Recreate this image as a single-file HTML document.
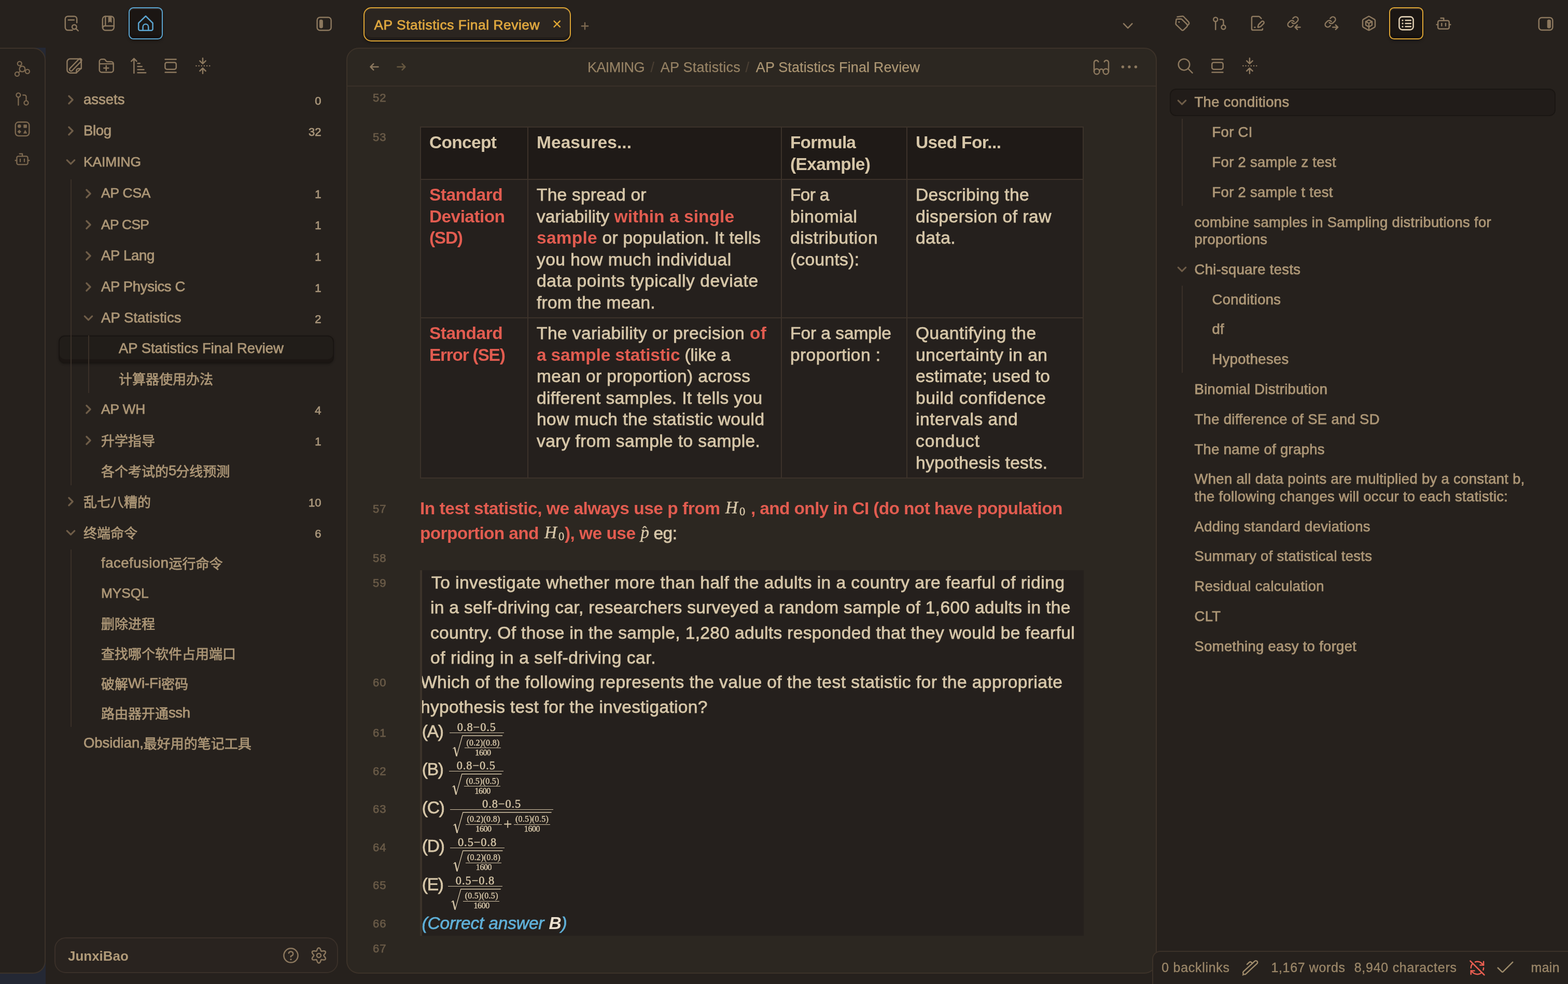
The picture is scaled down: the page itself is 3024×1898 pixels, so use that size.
<!DOCTYPE html>
<html lang="en"><head>
<meta charset="utf-8">
<title>AP Statistics Final Review - Obsidian</title>
<style>
*{box-sizing:border-box;margin:0;padding:0}
html,body{width:3024px;height:1898px;overflow:hidden;background:#26211d}
body{position:relative;will-change:transform;font-family:"Liberation Sans","Noto Sans CJK SC",sans-serif;color:#ac9676;font-size:26px;letter-spacing:.02em;-webkit-font-smoothing:antialiased;-webkit-text-stroke:.75px}
.abs{position:absolute}
svg{display:block;overflow:visible}
.ic{position:absolute;fill:none;stroke:#8f7b62;stroke-width:2;stroke-linecap:round;stroke-linejoin:round}
.t{position:absolute;white-space:nowrap;line-height:1}
.fit{display:inline-block;white-space:nowrap}
/* ribbon */
#bluebg{left:0;top:92px;width:88px;height:1806px;background:#242834}
#ribbon{left:-4px;top:92px;width:92px;height:1786px;background:#26211d;border:2px solid #3c3229;border-radius:0 24px 24px 0}
/* editor pane */
#pane{left:668px;top:92px;width:1563px;height:1786px;background:#2c2721;border:2px solid #3c3229;border-radius:24px;overflow:hidden}
#panehead{left:0;top:0;width:100%;height:74px;border-bottom:2px solid #3a3028}
/* status bar */
#status{left:2222px;top:1834px;width:820px;height:80px;background:#26211d;border:2px solid #3c3229;border-radius:16px 0 0 0}

/* top bars */
.btn-active{position:absolute;border-radius:10px;background:#1b1714}
/* file tree */
#tree{left:112px;top:162.4px;width:532px;font-size:27.5px;letter-spacing:-.3px}
.row{position:relative;width:532px;white-space:nowrap}
.row.fo{height:60.2px;line-height:60.2px}
.row.fi{height:57.8px;line-height:57.8px}
.row .nm{position:absolute;top:-.6px}
.row .ct{position:absolute;right:24.500px;top:2.300px;font-size:22px;letter-spacing:0;color:#a8957a}
.row svg.chev{position:absolute;width:29px;height:29px;fill:none;stroke:#6f5d48;stroke-width:2.7;stroke-linecap:round;stroke-linejoin:round}
.l0 .nm{left:49px}.l1 .nm{left:83px}.l2 .nm{left:117px}
.l0 svg.chev{left:10px}.l1 svg.chev{left:44px}
.row.fo svg.chev{top:15.6px}
.row.active::before{content:"";position:absolute;left:.5px;right:0;top:3px;bottom:1.2px;border-radius:12px;background:#211d19;border:2px solid #191512;box-shadow:inset 0 -6px 0 #1b1613,0 2px 4px rgba(0,0,0,.25)}
.guide{position:absolute;width:2px;background:#3a3028}
#vault{left:105px;top:1808px;width:547px;height:69px;border:2px solid #3a3029;border-radius:22px;background:#29231f}

/* outline */
#outline{left:2256px;top:168.3px;width:744px;font-size:27.5px;letter-spacing:.29px}
.orow{position:relative;width:744px;min-height:57.8px;padding:12.2px 0}
.orow .nm{display:block;line-height:33.4px;white-space:nowrap}
.o0 .nm{margin-left:47.5px}.o1 .nm{margin-left:81.5px}
.orow svg.chev{position:absolute;left:9px;top:14.5px;width:29px;height:29px;fill:none;stroke:#6f5d48;stroke-width:2.5;stroke-linecap:round;stroke-linejoin:round}
.orow.active::before{content:"";position:absolute;left:0;right:0;top:2.5px;bottom:2.5px;border-radius:12px;background:#211c19;border:2px solid #1a1613}
.orow.active .nm,.orow.active svg{position:relative}
.orow.active svg.chev{position:absolute}

/* pane content */
#pane{border:none}
#paneborder{left:668px;top:92px;width:1563px;height:1786px;border:2px solid #3c3229;border-radius:24px;pointer-events:none}
#panehead{left:0;top:0;width:100%;height:75px;border-bottom:2px solid #3a3028}
.crumb{font-size:27px;letter-spacing:0}
.crumb{margin-top:1px;-webkit-text-stroke:.25px}.crumb.c1{color:#968264}.crumb.c2{color:#ac9673}.crumb.sep{color:#4a3f33}
.ln{font-size:22px;line-height:22px;color:#695a47;letter-spacing:.05em;margin-top:1px}
.p{font-size:33.5px;line-height:48px;color:#d6c6a8;letter-spacing:0}
.red{color:#e25c50}.b,b,.th{font-weight:700;-webkit-text-stroke:0}.m{-webkit-text-stroke:.45px}.it{font-style:italic}.blue{color:#5fafd7}.cream{color:#ece1d0}
.m{font-family:"Liberation Serif",serif;color:#d6c6a8;letter-spacing:0}
.s1{font-size:22.4px;line-height:26px}
.s2{font-size:16px;line-height:19px}
.bar{background:#d6c6a8}
.rad{fill:none;stroke:#d6c6a8;stroke-linecap:butt;stroke-linejoin:miter}
#blk{background:#25201d}
#blkbar{background:#3c332a}
#tbl{width:1280px;display:grid;grid-template-columns:205px 487px 240px 338px;grid-template-rows:99px 265px 307px;gap:2px;padding:2px;background:#3c322a}
.td{background:#25201d;padding:8px 16px;font-size:33.5px;color:#d6c6a8;letter-spacing:0;overflow:hidden}
.td.th{background:#1f1a17}
.tl{height:41.6px;line-height:41.6px;white-space:nowrap}

/* tab + active buttons + status text */
#tab{left:701px;top:14px;width:400px;height:66px;border:2px solid #dea534;border-radius:15px;background:#2b2520;box-shadow:inset 0 -6px 0 #211c18,inset 0 2px 1px #38322d,0 3px 5px rgba(0,0,0,.35)}
#tabtxt{left:721.5px;top:32.3px;font-size:26.3px;line-height:32px;color:#dea73f;letter-spacing:0}
#homebtn{left:248px;top:14px;width:66px;height:62px;border:2.5px solid #5ba4cf;border-radius:9.500px;background:#1b1613;box-shadow:inset 0 -6px 0 #171210,inset 0 2px 1px #332c28,0 3px 5px rgba(0,0,0,.35)}
#outbtn{left:2679px;top:14px;width:66px;height:62px;border:2.5px solid #dea534;border-radius:9.500px;background:#1b1613;box-shadow:inset 0 -6px 0 #171210,inset 0 2px 1px #332c28,0 3px 5px rgba(0,0,0,.35)}
.st{font-size:25px;line-height:30px;color:#9a8668;letter-spacing:0;top:1851px;-webkit-text-stroke:.35px}
.cj{position:relative;top:2px;letter-spacing:0;font-size:26px}
</style>
</head>
<body>
<div class="abs" id="bluebg"></div>
<div class="abs" id="ribbon"></div>
<div class="abs" id="tree">
<div class="row fo l0"><svg class="chev" viewBox="0 0 24 24"><path d="m9 6 6 6-6 6"></path></svg><span class="nm"><span class="fit" style="letter-spacing: -0.02px;">assets</span></span><span class="ct">0</span></div>
<div class="row fo l0"><svg class="chev" viewBox="0 0 24 24"><path d="m9 6 6 6-6 6"></path></svg><span class="nm"><span class="fit" style="letter-spacing: -0.35px;">Blog</span></span><span class="ct">32</span></div>
<div class="row fo l0"><svg class="chev" viewBox="0 0 24 24"><path d="m6 9 6 6 6-6"></path></svg><span class="nm"><span class="fit" style="font-size: 26.4px; letter-spacing: -0.08px;">KAIMING</span></span></div>
<div class="row fo l1"><svg class="chev" viewBox="0 0 24 24"><path d="m9 6 6 6-6 6"></path></svg><span class="nm"><span class="fit" style="font-size: 26.4px; letter-spacing: -0.17px;">AP CSA</span></span><span class="ct">1</span></div>
<div class="row fo l1"><svg class="chev" viewBox="0 0 24 24"><path d="m9 6 6 6-6 6"></path></svg><span class="nm"><span class="fit" style="font-size: 26.4px; letter-spacing: -0.67px;">AP CSP</span></span><span class="ct">1</span></div>
<div class="row fo l1"><svg class="chev" viewBox="0 0 24 24"><path d="m9 6 6 6-6 6"></path></svg><span class="nm"><span class="fit" style="letter-spacing: -0.3px;">AP Lang</span></span><span class="ct">1</span></div>
<div class="row fo l1"><svg class="chev" viewBox="0 0 24 24"><path d="m9 6 6 6-6 6"></path></svg><span class="nm"><span class="fit" style="letter-spacing: -0.33px;">AP Physics C</span></span><span class="ct">1</span></div>
<div class="row fo l1"><svg class="chev" viewBox="0 0 24 24"><path d="m6 9 6 6 6-6"></path></svg><span class="nm"><span class="fit" style="letter-spacing: 0.06px;">AP Statistics</span></span><span class="ct">2</span></div>
<div class="row fi l2 active"><span class="nm"><span class="fit" style="letter-spacing: -0.04px;">AP Statistics Final Review</span></span></div>
<div class="row fi l2"><span class="nm"><span class="cj">计算器使用办法</span></span></div>
<div class="row fo l1"><svg class="chev" viewBox="0 0 24 24"><path d="m9 6 6 6-6 6"></path></svg><span class="nm"><span class="fit" style="font-size: 26.4px; letter-spacing: -0.16px;">AP WH</span></span><span class="ct">4</span></div>
<div class="row fo l1"><svg class="chev" viewBox="0 0 24 24"><path d="m9 6 6 6-6 6"></path></svg><span class="nm"><span class="cj">升学指导</span></span><span class="ct">1</span></div>
<div class="row fi l1"><span class="nm"><span class="cj">各个考试的</span><span class="fit" style="letter-spacing: -1px;">5</span><span class="cj">分线预测</span></span></div>
<div class="row fo l0"><svg class="chev" viewBox="0 0 24 24"><path d="m9 6 6 6-6 6"></path></svg><span class="nm"><span class="cj">乱七八糟的</span></span><span class="ct">10</span></div>
<div class="row fo l0"><svg class="chev" viewBox="0 0 24 24"><path d="m6 9 6 6 6-6"></path></svg><span class="nm"><span class="cj">终端命令</span></span><span class="ct">6</span></div>
<div class="row fi l1"><span class="nm"><span class="fit" style="letter-spacing: 0.51px;">facefusion</span><span class="cj">运行命令</span></span></div>
<div class="row fi l1"><span class="nm"><span class="fit" style="font-size: 26.4px; letter-spacing: -0.18px;">MYSQL</span></span></div>
<div class="row fi l1"><span class="nm"><span class="cj">删除进程</span></span></div>
<div class="row fi l1"><span class="nm"><span class="cj">查找哪个软件占用端口</span></span></div>
<div class="row fi l1"><span class="nm"><span class="cj">破解</span><span class="fit" style="letter-spacing: -0.04px;">Wi-Fi</span><span class="cj">密码</span></span></div>
<div class="row fi l1"><span class="nm"><span class="cj">路由器开通</span><span class="fit" style="letter-spacing: -0.4px;">ssh</span></span></div>
<div class="row fi l0"><span class="nm"><span class="fit" style="letter-spacing: -0.05px;">Obsidian,</span><span class="cj">最好用的笔记工具</span></span></div>
</div>
<div class="guide" style="left:136px;top:346px;height:590px"></div>
<div class="guide" style="left:170px;top:647px;height:111px"></div>
<div class="guide" style="left:136px;top:1060px;height:342px"></div>
<div class="abs" id="vault"><span class="t b" style="left:24px;top:19.500px;font-size:26px;line-height:28px;color:#b09a78"><span class="fit" style="letter-spacing: -0.03px;">JunxiBao</span></span></div>
<div class="abs" id="pane">
<!--PANE-->
<div class="abs" id="panehead"></div>
<div class="t crumb c1" style="left:465px;top:21px;line-height:32px"><span class="fit" style="letter-spacing: -0.59px;">KAIMING</span></div>
<div class="t crumb sep" style="left:586.5px;top:21px;line-height:32px">/</div>
<div class="t crumb c1" style="left:605.7px;top:21px;line-height:32px"><span class="fit" style="letter-spacing: 0.24px;">AP Statistics</span></div>
<div class="t crumb sep" style="left:769.5px;top:21px;line-height:32px">/</div>
<div class="t crumb c2" style="left:789.8px;top:21px;line-height:32px"><span class="fit" style="letter-spacing: 0.12px;">AP Statistics Final Review</span></div>
<div class="t ln" style="left:51px;top:85px">52</div>
<div class="t ln" style="left:51px;top:161px">53</div>
<div class="t ln" style="left:51px;top:877.5px">57</div>
<div class="t ln" style="left:51px;top:973px">58</div>
<div class="t ln" style="left:51px;top:1020.6px">59</div>
<div class="t ln" style="left:51px;top:1213px">60</div>
<div class="t ln" style="left:51px;top:1310px">61</div>
<div class="t ln" style="left:51px;top:1383.5px">62</div>
<div class="t ln" style="left:51px;top:1457px">63</div>
<div class="t ln" style="left:51px;top:1530.5px">64</div>
<div class="t ln" style="left:51px;top:1604px">65</div>
<div class="t ln" style="left:51px;top:1678px">66</div>
<div class="t ln" style="left:51px;top:1726px">67</div>
<div class="abs" id="tbl" style="left:142px;top:152px"><div class="td th" style=""><div class="tl"><span class="fit" style="letter-spacing: -0.67px;">Concept</span></div></div><div class="td th" style=""><div class="tl"><span class="fit" style="letter-spacing: 0.05px;">Measures...</span></div></div><div class="td th" style=""><div class="tl"><span class="fit" style="letter-spacing: -0.86px;">Formula</span></div><div class="tl"><span class="fit" style="letter-spacing: -0.64px;">(Example)</span></div></div><div class="td th" style=""><div class="tl"><span class="fit" style="letter-spacing: -0.63px;">Used For...</span></div></div><div class="td " style=""><div class="tl"><span class="fit red b" style="letter-spacing: -0.51px;">Standard</span></div><div class="tl"><span class="fit red b" style="letter-spacing: -0.6px;">Deviation</span></div><div class="tl"><span class="fit red b" style="letter-spacing: -1.29px;">(SD)</span></div></div><div class="td " style=""><div class="tl"><span class="fit" style="letter-spacing: 0.24px;">The spread or</span></div><div class="tl"><span class="fit" style="letter-spacing: 0.05px;">variability <b class="red">within a single</b></span></div><div class="tl"><span class="fit" style="letter-spacing: 0.26px;"><b class="red">sample</b> or population. It tells</span></div><div class="tl"><span class="fit" style="letter-spacing: 0.46px;">you how much individual</span></div><div class="tl"><span class="fit" style="letter-spacing: 0.62px;">data points typically deviate</span></div><div class="tl"><span class="fit" style="letter-spacing: 0.26px;">from the mean.</span></div></div><div class="td " style=""><div class="tl"><span class="fit" style="letter-spacing: -0.7px;">For a</span></div><div class="tl"><span class="fit" style="letter-spacing: 0.6px;">binomial</span></div><div class="tl"><span class="fit" style="letter-spacing: 0.6px;">distribution</span></div><div class="tl"><span class="fit" style="letter-spacing: 0.33px;">(counts):</span></div></div><div class="td " style=""><div class="tl"><span class="fit" style="letter-spacing: 0.34px;">Describing the</span></div><div class="tl"><span class="fit" style="letter-spacing: 0.51px;">dispersion of raw</span></div><div class="tl"><span class="fit" style="letter-spacing: 0.52px;">data.</span></div></div><div class="td " style=""><div class="tl"><span class="fit red b" style="letter-spacing: -0.51px;">Standard</span></div><div class="tl"><span class="fit red b" style="letter-spacing: -1.27px;">Error (SE)</span></div></div><div class="td " style=""><div class="tl"><span class="fit" style="letter-spacing: 0.43px;">The variability or precision <b class="red">of</b></span></div><div class="tl"><span class="fit" style="letter-spacing: -0.16px;"><b class="red">a sample statistic</b> (like a</span></div><div class="tl"><span class="fit" style="letter-spacing: 0.39px;">mean or proportion) across</span></div><div class="tl"><span class="fit" style="letter-spacing: 0.37px;">different samples. It tells you</span></div><div class="tl"><span class="fit" style="letter-spacing: 0.47px;">how much the statistic would</span></div><div class="tl"><span class="fit" style="letter-spacing: 0.39px;">vary from sample to sample.</span></div></div><div class="td " style=""><div class="tl"><span class="fit" style="letter-spacing: -0.05px;">For a sample</span></div><div class="tl"><span class="fit" style="letter-spacing: 0.41px;">proportion :</span></div></div><div class="td " style=""><div class="tl"><span class="fit" style="letter-spacing: 0.48px;">Quantifying the</span></div><div class="tl"><span class="fit" style="letter-spacing: 0.51px;">uncertainty in an</span></div><div class="tl"><span class="fit" style="letter-spacing: 0.24px;">estimate; used to</span></div><div class="tl"><span class="fit" style="letter-spacing: 0.59px;">build confidence</span></div><div class="tl"><span class="fit" style="letter-spacing: 0.55px;">intervals and</span></div><div class="tl"><span class="fit" style="letter-spacing: 0.94px;">conduct</span></div><div class="tl"><span class="fit" style="letter-spacing: 0.28px;">hypothesis tests.</span></div></div></div>
<div class="t p red b" style="left:142px;top:864.5px"><span class="fit" style="letter-spacing: -0.49px;">In test statistic, we always use p from</span></div>
<span class="t m" style="left:731px;top:867.0px;font-size:33px;line-height:40px;font-style:italic">H</span><span class="t m" style="left:758px;top:879.5px;font-size:22.4px;line-height:30px">0</span>
<div class="t p red b" style="left:780px;top:864.5px"><span class="fit" style="letter-spacing: -0.66px;">, and only in CI (do not have population</span></div>
<div class="t p red b" style="left:142px;top:912.6px"><span class="fit" style="letter-spacing: -0.67px;">porportion and</span></div>
<span class="t m" style="left:382px;top:915.1px;font-size:33px;line-height:40px;font-style:italic">H</span><span class="t m" style="left:409px;top:927.6px;font-size:22.4px;line-height:30px">0</span>
<div class="t p red b" style="left:421px;top:912.6px"><span class="fit" style="letter-spacing: -0.56px;">), we use</span></div>
<span class="t m" style="left:567.5px;top:914.6px;font-size:33px;line-height:40px;font-style:italic">p</span>
<span class="t m" style="left:570.9px;top:920.4px;font-size:26px;line-height:26px">ˆ</span>
<div class="t p" style="left:592.5px;top:912.6px"><span class="fit" style="letter-spacing: -0.54px;">eg:</span></div>
<div class="abs" id="blk" style="left:142px;top:1008px;width:1280px;height:704.5px"></div>
<div class="t p" style="left:164px;top:1008px"><span class="fit" style="letter-spacing: 0.47px;">To investigate whether more than half the adults in a country are fearful of riding</span></div>
<div class="t p" style="left:162px;top:1056.4px"><span class="fit" style="letter-spacing: 0.32px;">in a self-driving car, researchers surveyed a random sample of 1,600 adults in the</span></div>
<div class="t p" style="left:162px;top:1104.6px"><span class="fit" style="letter-spacing: 0.36px;">country. Of those in the sample, 1,280 adults responded that they would be fearful</span></div>
<div class="t p" style="left:162px;top:1152.8px"><span class="fit" style="letter-spacing: 0.56px;">of riding in a self-driving car.</span></div>
<div class="t p" style="left:143px;top:1200px"><span class="fit" style="letter-spacing: 0.46px;">Which of the following represents the value of the test statistic for the appropriate</span></div>
<div class="t p" style="left:143px;top:1248px"><span class="fit" style="letter-spacing: 0.31px;">hypothesis test for the investigation?</span></div>
<div class="t p" style="left:145.7px;top:1294.5px"><span style="letter-spacing:-1.2px">(A)</span></div><div class="abs bar" style="left:198.8px;top:1320.8px;width:105.2px;height:1.4px"></div><div class="t m s1" style="left:181.4px;width:140px;text-align:center;top:1298.3px"><span class="fit" style="letter-spacing: 0.95px;">0.8−0.5</span></div><svg class="abs rad" style="left:204.9px;top:1325.4px" width="98.1" height="44" viewBox="0 0 98.1 44"><path d="M0.4 27.2 L3.9 24.6" stroke-width="1.2"></path><path d="M3.6 24.4 L7.6 41.5" stroke-width="2.6"></path><path d="M7.6 42 L18.8 2 H96.1" stroke-width="1.3"></path></svg><div class="abs bar" style="left:228.0px;top:1349.7px;width:70.0px;height:1.2px"></div><div class="t m s2" style="left:203.5px;width:120px;text-align:center;top:1330.6px"><span class="fit" style="letter-spacing: 0.28px;">(0.2)(0.8)</span></div><div class="t m s2" style="left:203.5px;width:120px;text-align:center;top:1349.6px"><span class="fit" style="letter-spacing: -0.4px;">1600</span></div>
<div class="t p" style="left:145.7px;top:1368.4px"><span style="letter-spacing:-1.2px">(B)</span></div><div class="abs bar" style="left:198px;top:1394.7px;width:104.6px;height:1.4px"></div><div class="t m s1" style="left:180.3px;width:140px;text-align:center;top:1372.2px"><span class="fit" style="letter-spacing: 0.95px;">0.8−0.5</span></div><svg class="abs rad" style="left:204.1px;top:1399.3px" width="97.5" height="44" viewBox="0 0 97.5 44"><path d="M0.4 27.2 L3.9 24.6" stroke-width="1.2"></path><path d="M3.6 24.4 L7.6 41.5" stroke-width="2.6"></path><path d="M7.6 42 L18.8 2 H95.5" stroke-width="1.3"></path></svg><div class="abs bar" style="left:227.2px;top:1423.6px;width:69.4px;height:1.2px"></div><div class="t m s2" style="left:202.7px;width:120px;text-align:center;top:1404.5px"><span class="fit" style="letter-spacing: 0.28px;">(0.5)(0.5)</span></div><div class="t m s2" style="left:202.7px;width:120px;text-align:center;top:1423.5px"><span class="fit" style="letter-spacing: -0.4px;">1600</span></div>
<div class="t p" style="left:145.7px;top:1442.3px"><span style="letter-spacing:-1.2px">(C)</span></div><div class="abs bar" style="left:200.3px;top:1468.6px;width:198.7px;height:1.4px"></div><div class="t m s1" style="left:229.65px;width:140px;text-align:center;top:1446.1px"><span class="fit" style="letter-spacing: 0.95px;">0.8−0.5</span></div><svg class="abs rad" style="left:206.4px;top:1473.2px" width="191.6" height="44" viewBox="0 0 191.6 44"><path d="M0.4 27.2 L3.9 24.6" stroke-width="1.2"></path><path d="M3.6 24.4 L7.6 41.5" stroke-width="2.6"></path><path d="M7.6 42 L18.8 2 H189.6" stroke-width="1.3"></path></svg><div class="abs bar" style="left:229.5px;top:1497.5px;width:70.0px;height:1.2px"></div><div class="t m s2" style="left:204.5px;width:120px;text-align:center;top:1478.4px"><span class="fit" style="letter-spacing: 0.28px;">(0.2)(0.8)</span></div><div class="t m s2" style="left:204.5px;width:120px;text-align:center;top:1497.4px"><span class="fit" style="letter-spacing: -0.4px;">1600</span></div><div class="t m" style="left:303.0px;top:1480.6px;font-size:29px;line-height:32px">+</div><div class="abs bar" style="left:323.0px;top:1497.5px;width:69.8px;height:1.2px"></div><div class="t m s2" style="left:298.0px;width:120px;text-align:center;top:1478.4px"><span class="fit" style="letter-spacing: 0.28px;">(0.5)(0.5)</span></div><div class="t m s2" style="left:298.0px;width:120px;text-align:center;top:1497.4px"><span class="fit" style="letter-spacing: -0.4px;">1600</span></div>
<div class="t p" style="left:145.7px;top:1516.3px"><span style="letter-spacing:-1.2px">(D)</span></div><div class="abs bar" style="left:200.3px;top:1542.6px;width:104.6px;height:1.4px"></div><div class="t m s1" style="left:182.6px;width:140px;text-align:center;top:1520.1px"><span class="fit" style="letter-spacing: 0.95px;">0.5−0.8</span></div><svg class="abs rad" style="left:206.4px;top:1547.2px" width="97.5" height="44" viewBox="0 0 97.5 44"><path d="M0.4 27.2 L3.9 24.6" stroke-width="1.2"></path><path d="M3.6 24.4 L7.6 41.5" stroke-width="2.6"></path><path d="M7.6 42 L18.8 2 H95.5" stroke-width="1.3"></path></svg><div class="abs bar" style="left:229.5px;top:1571.5px;width:69.4px;height:1.2px"></div><div class="t m s2" style="left:205.0px;width:120px;text-align:center;top:1552.4px"><span class="fit" style="letter-spacing: 0.28px;">(0.2)(0.8)</span></div><div class="t m s2" style="left:205.0px;width:120px;text-align:center;top:1571.4px"><span class="fit" style="letter-spacing: -0.4px;">1600</span></div>
<div class="t p" style="left:145.7px;top:1590.3px"><span style="letter-spacing:-1.2px">(E)</span></div><div class="abs bar" style="left:196px;top:1616.6px;width:105px;height:1.4px"></div><div class="t m s1" style="left:178.5px;width:140px;text-align:center;top:1594.1px"><span class="fit" style="letter-spacing: 0.95px;">0.5−0.8</span></div><svg class="abs rad" style="left:202.1px;top:1621.2px" width="97.9" height="44" viewBox="0 0 97.9 44"><path d="M0.4 27.2 L3.9 24.6" stroke-width="1.2"></path><path d="M3.6 24.4 L7.6 41.5" stroke-width="2.6"></path><path d="M7.6 42 L18.8 2 H95.9" stroke-width="1.3"></path></svg><div class="abs bar" style="left:225.2px;top:1645.5px;width:69.8px;height:1.2px"></div><div class="t m s2" style="left:200.7px;width:120px;text-align:center;top:1626.4px"><span class="fit" style="letter-spacing: 0.28px;">(0.5)(0.5)</span></div><div class="t m s2" style="left:200.7px;width:120px;text-align:center;top:1645.4px"><span class="fit" style="letter-spacing: -0.4px;">1600</span></div>
<div class="t p it blue" style="left:145.6px;top:1665px"><span class="fit" style="letter-spacing: -0.17px;">(Correct answer <b class="cream">B</b>)</span></div>
<div class="abs" id="blkbar" style="left:142px;top:1008px;width:4px;height:704.5px"></div>
<!--/PANE-->
</div>
<div class="abs" id="paneborder"></div>
<div class="abs" id="outline">
<div class="orow o0 active"><svg class="chev" viewBox="0 0 24 24"><path d="m6 9 6 6 6-6"></path></svg><span class="nm">The conditions</span></div>
<div class="orow o1"><span class="nm">For CI</span></div>
<div class="orow o1"><span class="nm">For 2 sample z test</span></div>
<div class="orow o1"><span class="nm">For 2 sample t test</span></div>
<div class="orow o0"><span class="nm">combine samples in Sampling distributions for<br>proportions</span></div>
<div class="orow o0"><svg class="chev" viewBox="0 0 24 24"><path d="m6 9 6 6 6-6"></path></svg><span class="nm">Chi-square tests</span></div>
<div class="orow o1"><span class="nm">Conditions</span></div>
<div class="orow o1"><span class="nm">df</span></div>
<div class="orow o1"><span class="nm">Hypotheses</span></div>
<div class="orow o0"><span class="nm">Binomial Distribution</span></div>
<div class="orow o0"><span class="nm">The difference of SE and SD</span></div>
<div class="orow o0"><span class="nm">The name of graphs</span></div>
<div class="orow o0"><span class="nm">When all data points are multiplied by a constant b,<br>the following changes will occur to each statistic:</span></div>
<div class="orow o0"><span class="nm">Adding standard deviations</span></div>
<div class="orow o0"><span class="nm">Summary of statistical tests</span></div>
<div class="orow o0"><span class="nm">Residual calculation</span></div>
<div class="orow o0"><span class="nm">CLT</span></div>
<div class="orow o0"><span class="nm">Something easy to forget</span></div>
</div>
<div class="guide" style="left:2279px;top:229px;height:168px"></div>
<div class="guide" style="left:2279px;top:551px;height:168px"></div>
<div class="abs" id="status"></div>
<div class="abs" id="tab"></div>
<div class="t" id="tabtxt"><span class="fit" style="letter-spacing: 0.56px;">AP Statistics Final Review</span></div>
<div class="abs" id="homebtn"></div>
<div class="abs" id="outbtn"></div>
<div class="t st" style="left:2240.3px"><span class="fit" style="letter-spacing: 0.7px;">0 backlinks</span></div>
<div class="t st" style="left:2451.5px"><span class="fit" style="letter-spacing: 0.63px;">1,167 words</span></div>
<div class="t st" style="left:2611.7px"><span class="fit" style="letter-spacing: 0.74px;">8,940 characters</span></div>
<div class="t st" style="left:2952.6px"><span class="fit" style="letter-spacing: 0.27px;">main</span></div>
<svg class="abs" id="icons" style="left:0;top:0" width="3024" height="1898" viewBox="0 0 3024 1898" fill="none" stroke-linecap="round" stroke-linejoin="round">
<g stroke="#8c785e" stroke-width="2.5">
<!-- file-search -->
<path d="M139.5 58.3H131a5.2 5.2 0 0 1-5.2-5.2V36.6a5.2 5.2 0 0 1 5.2-5.2h12a5.2 5.2 0 0 1 5.2 5.2v7.2"></path>
<path d="M131.8 38.5h11"></path>
<circle cx="143.3" cy="52" r="4.3"></circle><path d="M146.6 55.3l4.2 4"></path>
<!-- book-marked -->
<rect x="197.8" y="31.4" width="22" height="27" rx="5.6"></rect>
<path d="M203.3 31.6v18.2"></path><path d="M220 50H202a3.6 3.6 0 0 0-3.6 3.6"></path>
<path d="M209.3 31.5h5.6v11.6l-2.8-2-2.8 2z" fill="#8c785e" stroke-width="1.2"></path>
<!-- left sidebar toggle -->
<rect x="611.6" y="33.6" width="27" height="25" rx="5.5"></rect>
<rect x="616.3" y="38.3" width="6" height="15.6" rx="2" fill="#8c785e" stroke-width="1"></rect>
<!-- right sidebar toggle -->
<rect x="2967.8" y="33.9" width="26.6" height="24.2" rx="5.5"></rect>
<rect x="2984.3" y="38.3" width="6.2" height="15.8" rx="2" fill="#8c785e" stroke-width="1"></rect>
<!-- nav: new note -->
<path d="M156.8 131.5v-12a6 6 0 0 0-6-6h-15.4a6 6 0 0 0-6 6v15.2a6 6 0 0 0 6 6H147z"></path>
<path d="M156.6 132.2h-5.2a4 4 0 0 0-4 4v4.2"></path>
<rect x="130.200" y="122" width="31.100" height="6" rx="3" transform="rotate(-45.800 145.750 125)" stroke-width="2.400"></rect>
<!-- nav: folder plus -->
<path d="M191.7 135v-16.2a4.5 4.5 0 0 1 4.5-4.5h4.4a3 3 0 0 1 2.4 1.2l1.6 2.2a3 3 0 0 0 2.4 1.2h7.2a4.5 4.5 0 0 1 4.5 4.5V135a4.5 4.5 0 0 1-4.500 4.5h-18a4.500 4.500 0 0 1-4.500-4.500z"></path>
<path d="M192 123.200h26.500" stroke-width="2.2"></path>
<path d="M200.200 131.300h9.200M204.800 126.700v9.200"></path>
<!-- nav: sort -->
<path d="M258.400 141v-28M253.300 118.200l5.100-5.200 5.100 5.200"></path>
<path d="M265.500 122.300h4.200M265.500 128.300h8.200M265.500 134.300h12M265.500 140.300h15.700"></path>
<!-- nav: gallery vertical -->
<path d="M318.600 114.600h21M318.600 139.500h21"></path><rect x="318.400" y="120.500" width="21.400" height="13.200" rx="3.400"></rect>
<!-- nav: fold -->
<path d="M391 112.300v10M385.300 117.300l5.700 5.500 5.700-5.500M391 141.800v-10M385.300 137l5.700-5.500 5.700 5.500"></path>
<path d="M378.400 127.100h26" stroke-dasharray="0.100 5.060"></path>
<!-- right: search -->
<circle cx="2283.500" cy="124.600" r="10.800"></circle><path d="M2291.300 132.400l8.300 8.200"></path>
<!-- right: gallery vertical -->
<path d="M2337.500 114.600h21M2337.500 139.500h21"></path><rect x="2337.300" y="120.500" width="21.400" height="13.200" rx="3.400"></rect>
<!-- right: fold -->
<path d="M2410 112.300v10M2404.300 117.300l5.700 5.500 5.700-5.500M2410 141.800v-10M2404.300 137l5.700-5.500 5.700 5.500"></path>
<path d="M2397.400 127.100h26" stroke-dasharray="0.100 5.060"></path>
<!-- tab list chevron -->
<path d="M2167 45.700l8.200 8.400 8.200-8.400" stroke-width="2.600"></path>
<!-- glasses -->
<circle cx="2115.200" cy="138" r="5.200"></circle><circle cx="2132.800" cy="138" r="5.200"></circle>
<path d="M2120.300 137a3.700 3.700 0 0 1 7.400 0"></path>
<path d="M2110 138v-17.500a4.300 4.300 0 0 1 8.300-1.300"></path><path d="M2138 138v-17.500a4.300 4.300 0 0 0-8.300-1.300"></path>
<!-- more dots -->
<g fill="#8c785e" stroke="none"><circle cx="2165.400" cy="129" r="2.700"></circle><circle cx="2177.900" cy="129" r="2.700"></circle><circle cx="2190.400" cy="129" r="2.700"></circle></g>
<!-- help -->
<circle cx="561" cy="1842.900" r="13.600"></circle>
<path d="M556.800 1838.500a4.300 4.300 0 0 1 8.400 1.400c0 2.900-4.300 4.300-4.300 4.300v1.500"></path><path d="M561 1850.600h.01" stroke-width="3.400"></path>
<!-- settings gear -->
<circle cx="614.900" cy="1842.900" r="4"></circle>
<path d="M614.9 1828.2 L616.2 1828.6 L617.2 1829.7 L618.0 1831.2 L618.6 1832.8 L619.1 1834.0 L619.6 1834.7 L620.5 1834.8 L621.8 1834.6 L623.5 1834.3 L625.2 1834.3 L626.7 1834.7 L627.6 1835.6 L627.9 1836.8 L627.5 1838.3 L626.6 1839.8 L625.5 1841.0 L624.7 1842.0 L624.4 1842.9 L624.7 1843.8 L625.5 1844.8 L626.6 1846.0 L627.5 1847.5 L627.9 1849.0 L627.6 1850.2 L626.7 1851.1 L625.2 1851.5 L623.5 1851.5 L621.8 1851.2 L620.5 1851.0 L619.6 1851.1 L619.1 1851.8 L618.6 1853.0 L618.0 1854.6 L617.2 1856.1 L616.2 1857.2 L614.9 1857.6 L613.6 1857.2 L612.6 1856.1 L611.8 1854.6 L611.2 1853.0 L610.7 1851.8 L610.1 1851.1 L609.3 1851.0 L608.0 1851.2 L606.3 1851.5 L604.6 1851.5 L603.1 1851.1 L602.2 1850.2 L601.9 1849.0 L602.3 1847.5 L603.2 1846.0 L604.3 1844.8 L605.1 1843.8 L605.4 1842.9 L605.1 1842.0 L604.3 1841.0 L603.2 1839.8 L602.3 1838.3 L601.9 1836.8 L602.2 1835.6 L603.1 1834.7 L604.6 1834.3 L606.3 1834.3 L608.0 1834.6 L609.3 1834.8 L610.1 1834.7 L610.7 1834.0 L611.2 1832.8 L611.8 1831.2 L612.6 1829.7 L613.6 1828.6Z"></path>
</g>

<g stroke="#7d6950" stroke-width="2.3">
<!-- ribbon: graph -->
<circle cx="37.800" cy="122.700" r="4"></circle><circle cx="42.900" cy="133" r="5.400"></circle><circle cx="52.900" cy="137.800" r="4"></circle><circle cx="33" cy="142.900" r="4"></circle>
<path d="M39.600 126.300l0.900 1.900M47.800 135.300l1.500 0.700M39.100 137l-3.300 3"></path>
<!-- ribbon: git pr -->
<circle cx="35.400" cy="183.300" r="4"></circle><path d="M35.400 187.600v15.200"></path><circle cx="50.500" cy="198.400" r="4"></circle><path d="M44.200 183.300h3.100a3.200 3.200 0 0 1 3.200 3.200v7.600"></path>
<!-- ribbon: shapes -->
<rect x="29.700" y="235.500" width="26.600" height="26.600" rx="6"></rect>
<g fill="#7d6950" stroke="none"><circle cx="37.300" cy="243.400" r="3.300"></circle><rect x="45.300" y="240.200" width="6.600" height="6.600" rx="1"></rect><path d="M37.300 250.200l3.800 3.800-3.800 3.800-3.800-3.800z"></path><path d="M48.600 250.600l3.800 6.800h-7.600z"></path></g>
<!-- ribbon: bot -->
<rect x="32.400" y="301.400" width="21.200" height="16" rx="3"></rect><path d="M37.700 296.600h5.400v4.600M29.600 309.500h2.400M54 309.500h2.400M39 306.800v5M47 306.800v5"></path>
</g>
<g stroke="#8c785e" stroke-width="2.5">
<!-- right top: tags -->
<path d="M2268.400 38.600Q2268.200 36.900 2270 36.800L2277 36.400Q2278.400 36.400 2279.400 37.400L2289.200 47Q2290.600 49.200 2289.200 51.300L2282.800 57.700Q2281 59.200 2279 57.900L2268.600 47.800Q2267.500 46.800 2267.600 45.400Z"></path>
<path d="M2270.500 32.500L2280.400 31.200Q2281.600 31.100 2282.600 32L2292.400 42.400Q2294 44.600 2292.600 46.700L2290.400 49"></path>
<path d="M2273.800 42.500h.01" stroke-width="3"></path>
<!-- git pr -->
<circle cx="2344.300" cy="37.500" r="4"></circle><path d="M2344.300 41.800v15.200"></path><circle cx="2359.500" cy="52.500" r="4"></circle><path d="M2353 37.500h3.300a3.200 3.200 0 0 1 3.200 3.200v7.600"></path>
<!-- file pen -->
<g transform="translate(2408.700 29) scale(1.320)" stroke-width="1.900">
<path d="m18 5-2.414-2.414A2 2 0 0 0 14.172 2H6a2 2 0 0 0-2 2v16a2 2 0 0 0 2 2h12a2 2 0 0 0 2-2"></path>
<path d="M21.378 12.626a1 1 0 0 0-3.004-3.004l-4.010 4.012a2 2 0 0 0-.506.854l-.837 2.870a.5.500 0 0 0 .620.620l2.870-.837a2 2 0 0 0 .854-.506z"></path>
<path d="M8 18h1"></path>
</g>
<!-- link in -->
<g transform="translate(2481.600 30.400) scale(1)" stroke-width="2.500">
<path d="M10 13a5 5 0 0 0 7.540.540l3-3a5 5 0 0 0-7.070-7.070l-1.720 1.710"></path>
<path d="M14 11a5 5 0 0 0-7.540-.540l-3 3a5 5 0 0 0 7.070 7.070l1.710-1.710"></path>
</g>
<path d="M2507.600 52.500h-9.600M2502 48.200l-4.300 4.300 4.300 4.300"></path>
<!-- link out -->
<g transform="translate(2553.600 30.400) scale(1)" stroke-width="2.500">
<path d="M10 13a5 5 0 0 0 7.540.540l3-3a5 5 0 0 0-7.070-7.070l-1.720 1.710"></path>
<path d="M14 11a5 5 0 0 0-7.540-.540l-3 3a5 5 0 0 0 7.070 7.070l1.710-1.710"></path>
</g>
<path d="M2570.200 52.500h9.600M2575.800 48.200l4.300 4.300-4.300 4.300"></path>
<!-- box -->
<g transform="translate(2624 29) scale(1.333)" stroke-width="1.880">
<path d="M21 8a2 2 0 0 0-1-1.730l-7-4a2 2 0 0 0-2 0l-7 4A2 2 0 0 0 3 8v8a2 2 0 0 0 1 1.730l7 4a2 2 0 0 0 2 0l7-4A2 2 0 0 0 21 16Z"></path>
<path d="M7.500 9.500 12 12l4.500-2.500M12 21.500V12"></path><path d="M7.500 9.600v5l4.500 2.600 4.500-2.600v-5L12 7z"></path>
</g>
<!-- right bot -->
<rect x="2773.200" y="39.700" width="21.600" height="16" rx="3"></rect><path d="M2778.600 35h5.700v4.500M2770.600 47.600h2.400M2795 47.600h2.400M2780.400 45.300v4.500M2788 45.300v4.500"></path>
<!-- back / forward arrows -->
<path d="M729.500 129h-15M720.300 123.200l-5.800 5.800 5.800 5.800" stroke-width="2.500"></path>
</g>
<path d="M766.400 129h15M775.600 123.200l5.800 5.800-5.800 5.800" stroke="#66573f" stroke-width="2.500"></path>
<!-- tab close / new tab -->
<path d="M1068.600 40.600l11.300 11.300M1079.900 40.600l-11.300 11.300" stroke="#dea534" stroke-width="2.400"></path>
<path d="M1121.800 50.200h12.400M1128 44v12.400" stroke="#7d6950" stroke-width="2.400"></path>
<!-- home (active) -->
<g stroke="#5ba4cf" stroke-width="2.5">
<path d="M267.200 44.500v11.200a3 3 0 0 0 3 3h21.400a3 3 0 0 0 3-3V44.500L281 31z"></path><path d="M275.600 58.500v-6.600a5.300 5.300 0 0 1 10.600 0v6.600"></path>
</g>
<!-- outline icon (active) -->
<g stroke="#dccbb0" stroke-width="2.600">
<rect x="2698.400" y="32.400" width="27.200" height="25" rx="6"></rect>
<path d="M2710.500 39.300h10.500M2710.500 45.200h10.500M2710.500 51.300h10.500" stroke-width="2.400"></path>
<path d="M2705 39.300h.01M2705 45.200h.01M2705 51.300h.01" stroke-width="3.200"></path>
</g>
<!-- status: pen -->
<g stroke="#a08c6c" stroke-width="2.400">
<rect x="2393.300" y="1863.100" width="35.900" height="6.400" rx="3.200" transform="rotate(-42.700 2411.250 1866.300)"></rect>
<path d="M2405 1860.200L2409.500 1856Q2411.200 1854.600 2413 1856L2415.400 1858.200M2398.600 1879l-1.600 1.600"></path>
</g>
<!-- status: sync off -->
<g stroke="#ec5f52" stroke-width="2.500" transform="translate(2832.800 1850.800) scale(1.350)">
<g stroke-width="1.850">
<path d="M21 8L18.740 5.740A9.750 9.750 0 0 0 12 3C11 3 10.030 3.160 9.130 3.470"></path><path d="M8 16H3v5"></path><path d="M3 12C3 9.510 4 7.260 5.640 5.640"></path>
<path d="m3 16 2.260 2.260A9.750 9.750 0 0 0 12 21c2.490 0 4.740-1 6.360-2.640"></path><path d="M21 12c0 1-.160 1.970-.470 2.870"></path><path d="M21 3v5h-5"></path><path d="M22 22 2 2"></path>
</g></g>
<!-- status: check -->
<path d="M2888.700 1866.800l7.800 7.600a1.600 1.600 0 0 0 2.200 0l18.600-18.600" stroke="#9c8a6a" stroke-width="2.600"></path>
</svg>



</body></html>
